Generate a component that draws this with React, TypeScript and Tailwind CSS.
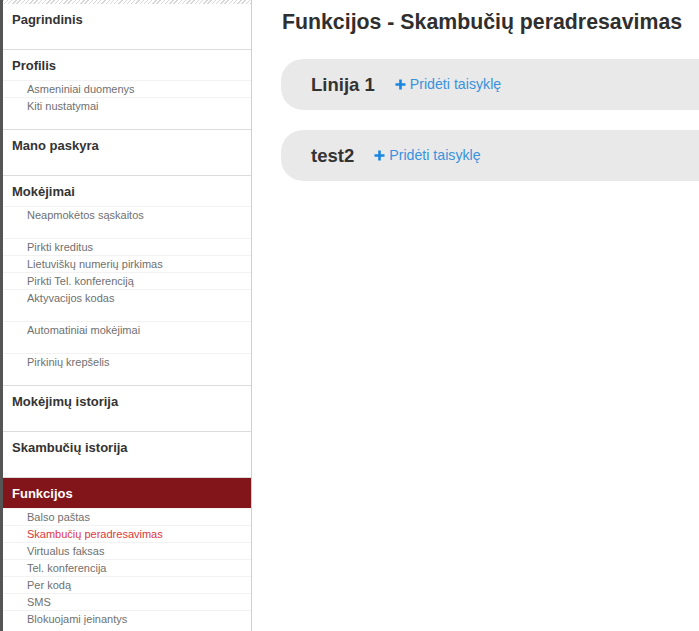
import React from "react";

type Item = { label: string; tall?: boolean; active?: boolean };
type Section = { title: string; items?: Item[]; active?: boolean };

const sections: Section[] = [
  { title: "Pagrindinis" },
  { title: "Profilis", items: [{ label: "Asmeniniai duomenys" }, { label: "Kiti nustatymai" }] },
  { title: "Mano paskyra" },
  {
    title: "Mokėjimai",
    items: [
      { label: "Neapmokėtos sąskaitos", tall: true },
      { label: "Pirkti kreditus" },
      { label: "Lietuviškų numerių pirkimas" },
      { label: "Pirkti Tel. konferenciją" },
      { label: "Aktyvacijos kodas", tall: true },
      { label: "Automatiniai mokėjimai", tall: true },
      { label: "Pirkinių krepšelis" },
    ],
  },
  { title: "Mokėjimų istorija" },
  { title: "Skambučių istorija" },
  {
    title: "Funkcijos",
    active: true,
    items: [
      { label: "Balso paštas" },
      { label: "Skambučių peradresavimas", active: true },
      { label: "Virtualus faksas" },
      { label: "Tel. konferencija" },
      { label: "Per kodą" },
      { label: "SMS" },
      { label: "Blokuojami įeinantys" },
    ],
  },
];

function Plus() {
  return (
    <svg width="11" height="11" viewBox="0 0 11 11" className="shrink-0">
      <path d="M5.5 0.5V10.5M0.5 5.5H10.5" stroke="#1a86e0" strokeWidth="2.6" />
    </svg>
  );
}

function Card({ name }: { name: string }) {
  return (
    <div className="h-[51px] rounded-l-[22px] bg-[#e9e9e9] flex items-center pl-[30px]">
      <span className="text-[18.5px] font-bold text-[#333]">{name}</span>
      <span className="ml-[20px] flex items-center gap-[4px] text-[14.2px] text-[#3a92dc]">
        <Plus />
        Pridėti taisyklę
      </span>
    </div>
  );
}

export default function App() {
  return (
    <div className="flex w-[699px] h-[631px] overflow-hidden bg-white font-['Liberation_Sans',Arial,sans-serif]">
      <aside className="w-[252px] shrink-0 border-l-[3px] border-l-[#555] border-r border-r-[#cfcfcf] flex flex-col">
        <div className="h-[4px] shrink-0 bg-[repeating-linear-gradient(135deg,#d6d6d6_0px,#d6d6d6_1px,#ffffff_1px,#ffffff_3px)]" />
        {sections.map((s, i) => {
          const last = i === sections.length - 1;
          return (
            <div
              key={s.title}
              className={last ? "" : "pb-[15px] border-b border-[#dcdcdc]"}
            >
              <div
                className={
                  "h-[30px] flex items-center pt-[2px] pl-[9px] text-[13px] font-bold " +
                  (s.active ? "bg-[#82151a] text-white" : "text-[#333]")
                }
              >
                {s.title}
              </div>
              {s.items?.map((it) => (
                <div
                  key={it.label}
                  className={
                    "border-t border-[#f2f2f2] pl-[24px] text-[11px] leading-[16px] " +
                    (it.tall ? "h-[32px] " : "h-[17px] ") +
                    (it.active ? "text-[#e0383c]" : "text-[#707070]")
                  }
                >
                  {it.label}
                </div>
              ))}
            </div>
          );
        })}
      </aside>
      <main className="flex-1 pl-[29px] pt-[10px] flex flex-col">
        <h1 className="pl-[1px] text-[21.3px] leading-[25px] font-bold text-[#2f2f2f] whitespace-nowrap">
          Funkcijos - Skambučių peradresavimas
        </h1>
        <div className="mt-[24px] flex flex-col gap-[20px]">
          <Card name="Linija 1" />
          <Card name="test2" />
        </div>
      </main>
    </div>
  );
}
